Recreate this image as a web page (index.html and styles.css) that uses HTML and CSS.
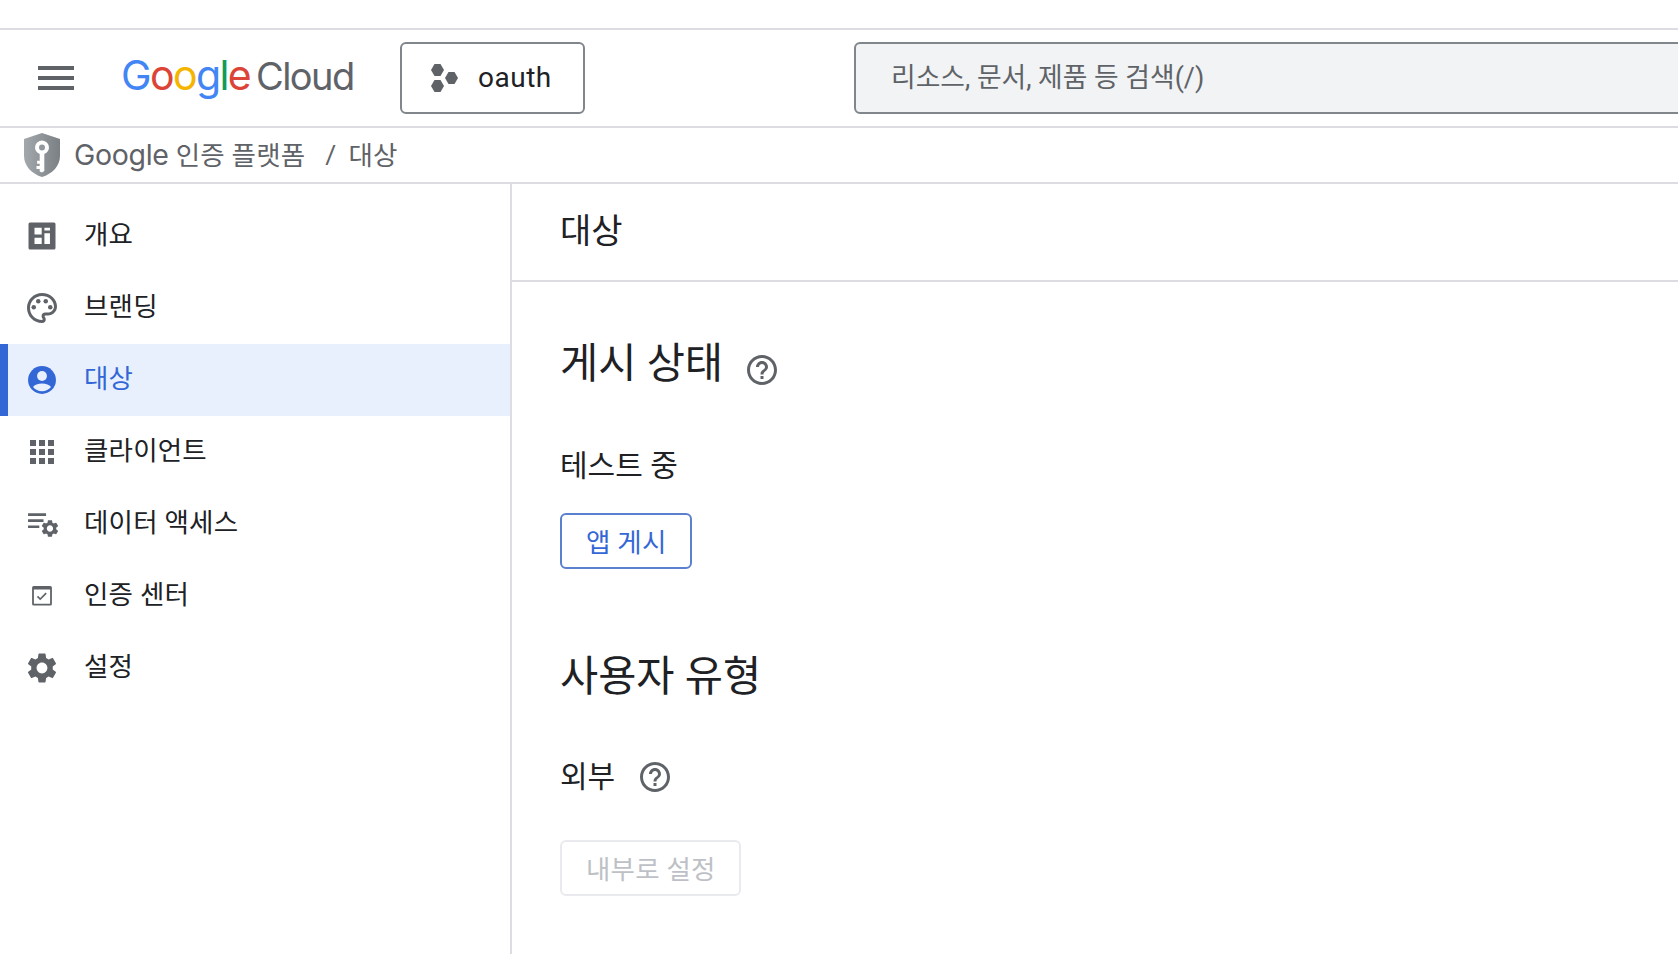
FILE: index.html
```html
<!DOCTYPE html>
<html lang="ko">
<head>
    <meta charset="UTF-8">
    <meta name="viewport" content="width=device-width, initial-scale=1.0">
    <title>대상 - Google 인증 플랫폼</title>
    <link rel="stylesheet" href="styles.css">
</head>
<body>
    <div class="top-strip"></div>

    <header class="header">
        <button class="menu-button" aria-label="메뉴">
            <span></span><span></span><span></span>
        </button>
        <div class="logo">
            <span class="logo-blue">G</span><span class="logo-red">o</span><span class="logo-yellow">o</span><span class="logo-blue">g</span><span class="logo-green">l</span><span class="logo-red">e</span>
            <span class="logo-cloud">Cloud</span>
        </div>
        <button class="project-button">
            <svg class="project-icon" viewBox="0 0 28 28">
                <polygon points="1,6 4.5,0 10.5,0 14,6 10.5,12 4.5,12"/>
                <polygon points="15,14 18.5,8 24.5,8 28,14 24.5,20 18.5,20"/>
                <polygon points="1,22 4.5,16 10.5,16 14,22 10.5,28 4.5,28"/>
            </svg>
            <span class="project-name">oauth</span>
        </button>
        <div class="search">리소스, 문서, 제품 등 검색(/)</div>
    </header>

    <div class="breadcrumb">
        <svg class="shield" viewBox="0 0 36 44">
            <defs>
                <linearGradient id="shield-fill" x1="0" y1="0" x2="1" y2="0">
                    <stop offset="0" stop-color="#a3a8ad"/>
                    <stop offset="1" stop-color="#7b8085"/>
                </linearGradient>
            </defs>
            <path fill="url(#shield-fill)" d="M18 0l18 6v17c0 10-8 18-18 21C8 41 0 33 0 23V6z"/>
            <path fill="#fff" d="M18 7.500a7 7 0 0 1 2.300 13.600V38l-2.300 1.600-2.300-1V36h-3.200v-3h3.200v-2.200h-2.600v-3h2.600v-6.700A7 7 0 0 1 18 7.500z"/>
            <circle cx="18" cy="14.500" r="3" fill="#93989d"/>
        </svg>
        <span class="crumb-google">Google</span>
        <span class="crumb-name">인증 플랫폼</span>
        <span class="crumb-sep">/</span>
        <span class="crumb-name">대상</span>
    </div>

    <div class="main">
        <nav class="sidebar">
            <a class="nav-item">
                <svg class="icon" viewBox="0 0 24 24"><path fill-rule="evenodd" d="M4 3h16a1 1 0 0 1 1 1v16a1 1 0 0 1-1 1H4a1 1 0 0 1-1-1V4a1 1 0 0 1 1-1zm3 3.500V11h4.800V6.500zm0 6.700v4.100h4.800v-4.100zm6.600-6.700v1.900h3.700V6.500zm0 3.700v7.100h3.700v-7.100z"/></svg>
                <span class="nav-text">개요</span>
            </a>
            <a class="nav-item">
                <svg class="icon" viewBox="0 0 24 24">
                    <path d="M12 22C6.490 22 2 17.510 2 12S6.490 2 12 2s10 4.040 10 9c0 3.310-2.690 6-6 6h-1.770c-.28 0-.5.22-.5.5 0 .12.05.23.13.33.41.47.64 1.060.64 1.670A2.500 2.500 0 0 1 12 22zm0-18c-4.410 0-8 3.590-8 8s3.590 8 8 8c.28 0 .5-.22.5-.5a.54.54 0 0 0-.14-.35c-.41-.46-.63-1.050-.63-1.650a2.500 2.500 0 0 1 2.500-2.500H16c2.210 0 4-1.790 4-4 0-3.860-3.590-7-8-7z"/>
                    <circle cx="6.500" cy="11.500" r="1.500"/>
                    <circle cx="9.500" cy="7.500" r="1.500"/>
                    <circle cx="14.500" cy="7.500" r="1.500"/>
                    <circle cx="17.500" cy="11.500" r="1.500"/>
                </svg>
                <span class="nav-text">브랜딩</span>
            </a>
            <a class="nav-item active">
                <svg class="icon" viewBox="0 0 24 24">
                    <circle cx="12" cy="12" r="9.300"/>
                    <circle class="icon-cut" cx="12" cy="9.300" r="3.300"/>
                    <path class="icon-cut" d="M12 14.400c-2.700 0-5 .9-6 2.300 1.400 1.800 3.600 2.800 6 2.800s4.600-1 6-2.800c-1-1.400-3.300-2.300-6-2.300z"/>
                </svg>
                <span class="nav-text">대상</span>
            </a>
            <a class="nav-item">
                <svg class="icon" viewBox="0 0 24 24"><path d="M4 4h4v4H4zm6 0h4v4h-4zm6 0h4v4h-4zM4 10h4v4H4zm6 0h4v4h-4zm6 0h4v4h-4zM4 16h4v4H4zm6 0h4v4h-4zm6 0h4v4h-4z"/></svg>
                <span class="nav-text">클라이언트</span>
            </a>
            <a class="nav-item">
                <svg class="icon" viewBox="0 0 24 24">
                    <path d="M2.700 4.900h12v1.800h-12zm0 4h10.300v1.800H2.700zm0 4.100h7.500v1.700H2.700z"/>
                    <path transform="translate(17.300 15) scale(.58) translate(-12 -12)" d="M19.140 12.940c.04-.3.06-.61.06-.94 0-.32-.02-.64-.07-.94l2.030-1.580c.18-.14.23-.41.12-.61l-1.920-3.320c-.12-.22-.37-.29-.59-.22l-2.390.96c-.5-.38-1.030-.7-1.620-.94l-.36-2.540c-.04-.24-.24-.41-.48-.41h-3.840c-.24 0-.43.17-.47.41l-.36 2.540c-.59.24-1.130.57-1.620.94l-2.390-.96c-.22-.08-.47 0-.59.22L2.740 8.870c-.12.21-.08.47.12.61l2.030 1.580c-.05.3-.09.63-.09.94s.02.64.07.94l-2.030 1.580c-.18.14-.23.41-.12.61l1.920 3.320c.12.22.37.29.59.22l2.390-.96c.5.38 1.030.7 1.620.94l.36 2.540c.05.24.24.41.48.41h3.840c.24 0 .44-.17.47-.41l.36-2.540c.59-.24 1.130-.56 1.620-.94l2.390.96c.22.08.47 0 .59-.22l1.920-3.320c.12-.22.07-.47-.12-.61l-2.010-1.580zM12 15.600c-1.980 0-3.600-1.620-3.600-3.600s1.620-3.600 3.600-3.600 3.600 1.620 3.600 3.600-1.620 3.600-3.600 3.600z"/>
                </svg>
                <span class="nav-text">데이터 액세스</span>
            </a>
            <a class="nav-item">
                <svg class="icon" viewBox="0 0 24 24">
                    <path fill-rule="evenodd" d="M6.500 5.300h11a1.100 1.100 0 0 1 1.100 1.100v10.900a1.100 1.100 0 0 1-1.100 1.100h-11a1.100 1.100 0 0 1-1.100-1.100V6.400a1.100 1.100 0 0 1 1.100-1.100zm.1 2.400v9.500h10.800V7.700z"/>
                    <path d="M10.800 14.900l-2.200-2.200.8-.8 1.400 1.400 3.600-3.600.8.8z"/>
                </svg>
                <span class="nav-text">인증 센터</span>
            </a>
            <a class="nav-item">
                <svg class="icon" viewBox="0 0 24 24"><path d="M19.140 12.940c.04-.3.06-.61.06-.94 0-.32-.02-.64-.07-.94l2.030-1.580c.18-.14.23-.41.12-.61l-1.920-3.320c-.12-.22-.37-.29-.59-.22l-2.390.96c-.5-.38-1.030-.7-1.620-.94l-.36-2.540c-.04-.24-.24-.41-.48-.41h-3.840c-.24 0-.43.17-.47.41l-.36 2.540c-.59.24-1.130.57-1.620.94l-2.390-.96c-.22-.08-.47 0-.59.22L2.740 8.870c-.12.21-.08.47.12.61l2.030 1.580c-.05.3-.09.63-.09.94s.02.64.07.94l-2.030 1.580c-.18.14-.23.41-.12.61l1.920 3.320c.12.22.37.29.59.22l2.390-.96c.5.38 1.030.7 1.620.94l.36 2.540c.05.24.24.41.48.41h3.840c.24 0 .44-.17.47-.41l.36-2.540c.59-.24 1.130-.56 1.620-.94l2.390.96c.22.08.47 0 .59-.22l1.920-3.320c.12-.22.07-.47-.12-.61l-2.010-1.580zM12 15.600c-1.980 0-3.600-1.620-3.600-3.600s1.620-3.600 3.600-3.600 3.600 1.620 3.600 3.600-1.620 3.600-3.600 3.600z"/></svg>
                <span class="nav-text">설정</span>
            </a>
        </nav>

        <main class="content">
            <div class="page-title">대상</div>
            <section class="section">
                <div class="section-heading">
                    <h2>게시 상태</h2>
                    <svg class="help" viewBox="0 0 24 24"><path d="M11 18h2v-2h-2v2zm1-16C6.480 2 2 6.480 2 12s4.480 10 10 10 10-4.480 10-10S17.520 2 12 2zm0 18c-4.410 0-8-3.590-8-8s3.590-8 8-8 8 3.590 8 8-3.590 8-8 8zm0-14c-2.210 0-4 1.790-4 4h2c0-1.100.9-2 2-2s2 .9 2 2c0 2-3 1.750-3 5h2c0-2.250 3-2.500 3-5 0-2.210-1.790-4-4-4z"/></svg>
                </div>
                <div class="field-label">테스트 중</div>
                <button class="btn btn-primary">앱 게시</button>
            </section>
            <section class="section section-user">
                <div class="section-heading">
                    <h2>사용자 유형</h2>
                </div>
                <div class="field-label field-help">
                    외부
                    <svg class="help" viewBox="0 0 24 24"><path d="M11 18h2v-2h-2v2zm1-16C6.480 2 2 6.480 2 12s4.480 10 10 10 10-4.480 10-10S17.520 2 12 2zm0 18c-4.410 0-8-3.590-8-8s3.590-8 8-8 8 3.590 8 8-3.590 8-8 8zm0-14c-2.210 0-4 1.790-4 4h2c0-1.100.9-2 2-2s2 .9 2 2c0 2-3 1.750-3 5h2c0-2.250 3-2.500 3-5 0-2.210-1.790-4-4-4z"/></svg>
                </div>
                <button class="btn btn-disabled">내부로 설정</button>
            </section>
        </main>
    </div>
</body>
</html>
```

FILE: styles.css
```css
:root {
    --line: #dcdce2;
    --text: #202124;
    --gray: #5f6368;
    --blue: #3367d6;
    --active-bg: #e8f0fe;
}

* {
    box-sizing: border-box;
}

body {
    font-family: Roboto, "Noto Sans CJK KR", sans-serif;
    margin: 0;
    height: 100vh;
    display: flex;
    flex-direction: column;
    overflow: hidden;
    background-color: #fff;
    color: var(--text);
}

button {
    font-family: inherit;
    background: none;
    cursor: pointer;
}

.top-strip {
    height: 30px;
    flex: none;
    border-bottom: 2px solid var(--line);
}

.header {
    height: 98px;
    flex: none;
    display: flex;
    align-items: center;
    border-bottom: 2px solid var(--line);
    overflow: hidden;
}

.menu-button {
    width: 36px;
    height: 24px;
    margin-left: 38px;
    padding: 0;
    border: none;
    display: flex;
    flex-direction: column;
    justify-content: space-between;
    flex: none;
}

.menu-button span {
    display: block;
    height: 4px;
    background-color: var(--gray);
}

.logo {
    width: 232px;
    margin-left: 47px;
    padding-bottom: 6px;
    flex: none;
    font-family: Inter, sans-serif;
    font-size: 41px;
    letter-spacing: -1.6px;
    white-space: nowrap;
}

.logo-blue { color: #4285f4; }
.logo-red { color: #db4437; }
.logo-yellow { color: #f4b400; }
.logo-green { color: #0f9d58; }
.logo-cloud {
    color: var(--gray);
    font-size: 38px;
    margin-left: -4px;
}

.project-button {
    width: 185px;
    height: 72px;
    margin-left: 47px;
    padding: 0 0 0 28px;
    flex: none;
    display: flex;
    align-items: center;
    gap: 20px;
    border: 2px solid #80868b;
    border-radius: 6px;
    font-size: 28px;
    letter-spacing: .5px;
    color: var(--text);
}

.project-name {
    padding-bottom: 2px;
}

.project-icon {
    width: 28px;
    height: 28px;
    fill: var(--gray);
}

.search {
    width: 1000px;
    height: 72px;
    margin-left: 269px;
    padding: 0 0 6px 35px;
    flex: none;
    display: flex;
    align-items: center;
    background-color: #f1f3f4;
    border: 2px solid #80868b;
    border-radius: 6px;
    font-size: 26.8px;
    color: var(--gray);
}

.breadcrumb {
    height: 56px;
    flex: none;
    display: flex;
    align-items: center;
    padding-left: 24px;
    border-bottom: 2px solid var(--line);
    font-size: 26.5px;
    letter-spacing: .2px;
    color: var(--gray);
}

.shield {
    width: 36px;
    height: 44px;
    margin-right: 14px;
}

.crumb-google {
    font-family: Inter, sans-serif;
    font-size: 28.5px;
    letter-spacing: -.3px;
    margin-right: 7px;
    padding-bottom: 2px;
}

.crumb-name {
    padding-bottom: 4px;
}

.crumb-sep {
    margin: 0 12px 0 20px;
    padding-bottom: 4px;
}

.main {
    flex: 1;
    display: flex;
    min-height: 0;
}

.sidebar {
    width: 512px;
    flex: none;
    padding-top: 16px;
    border-right: 2px solid var(--line);
}

.nav-item {
    height: 72px;
    display: flex;
    align-items: center;
    gap: 24px;
    padding-left: 24px;
    font-size: 26.5px;
    letter-spacing: .2px;
    color: var(--text);
}

.nav-text {
    padding-bottom: 8px;
}

.icon {
    width: 36px;
    height: 36px;
    flex: none;
    fill: var(--gray);
}

.nav-item.active {
    background-color: var(--active-bg);
    box-shadow: inset 8px 0 0 var(--blue);
    color: var(--blue);
}

.active .icon {
    fill: var(--blue);
}

.active .icon-cut {
    fill: var(--active-bg);
}

.content {
    flex: 1;
}

.page-title {
    height: 98px;
    padding: 0 0 8px 48px;
    display: flex;
    align-items: center;
    border-bottom: 2px solid var(--line);
    font-size: 34px;
}

.section {
    padding: 59px 0 0 48px;
}

.section-user {
    padding-top: 85px;
}

.section-heading {
    display: flex;
    align-items: center;
    gap: 21px;
    height: 46px;
}

h2 {
    margin: 0 0 8px;
    font-size: 41.5px;
    font-weight: 400;
}

.help {
    width: 36px;
    height: 36px;
    flex: none;
    fill: var(--gray);
    margin-top: 12px;
}

.field-label {
    margin-top: 56px;
    height: 40px;
    display: flex;
    align-items: center;
    font-size: 30px;
}

.field-help {
    margin-top: 54px;
    gap: 22px;
}

.field-help .help {
    margin-top: 6px;
}

.btn {
    display: block;
    height: 56px;
    padding: 0 23px 2px 24px;
    border-radius: 6px;
    font-size: 26.5px;
    letter-spacing: .2px;
}

.btn-primary {
    margin-top: 30px;
    border: 2px solid #5a80cf;
    color: var(--blue);
}

.btn-disabled {
    margin-top: 46px;
    border: 2px solid #e8eaed;
    color: #bdc1c6;
}
```
